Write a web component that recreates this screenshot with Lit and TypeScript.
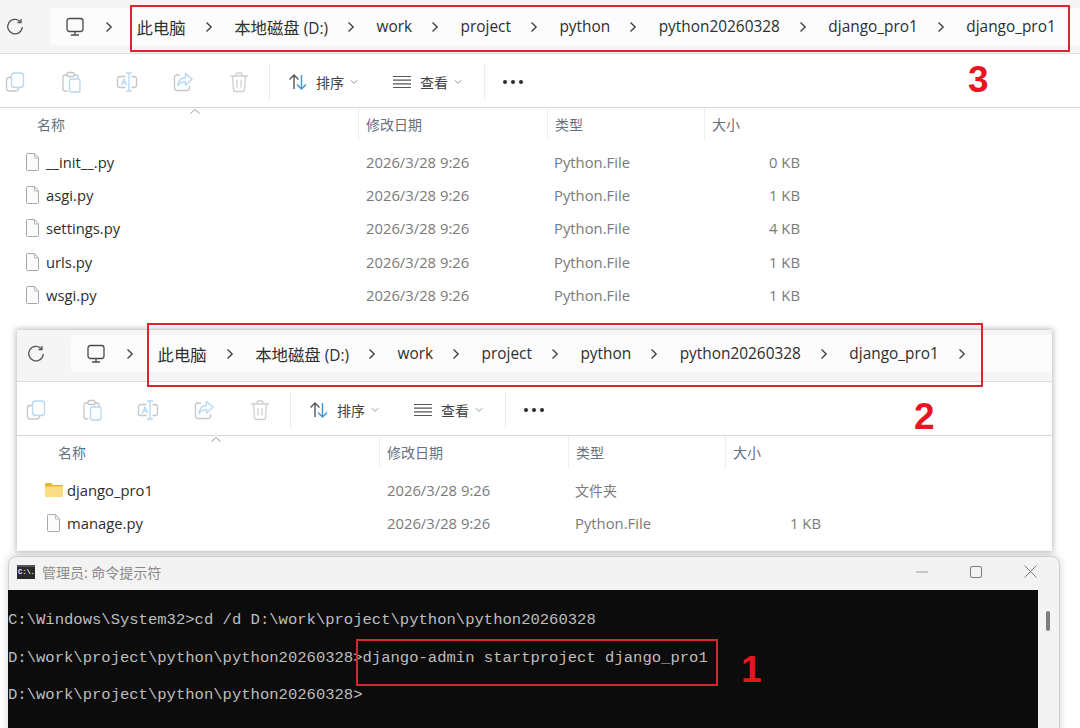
import { LitElement, html, css, svg } from "lit";
import { customElement, property } from "lit/decorators.js";

const FONT = css`"Open Sans", "Noto Sans CJK SC", sans-serif`;
const GRAY = "#c6c6c6";
const BLUE = "#b5d8f3";

const chevron = html`<svg width="8" height="12" viewBox="0 0 8 12"><path d="M1.5 1.5 6.2 6 1.5 10.5" fill="none" stroke="#3c3c3c" stroke-width="1.3"/></svg>`;
const caret = html`<svg width="8" height="6" viewBox="0 0 8 6"><path d="M.8 1.2 4 4.4 7.2 1.2" fill="none" stroke="#9a9a9a" stroke-width="1"/></svg>`;

const ico = (content: unknown) => html`<svg width="24" height="24" viewBox="0 0 24 24" fill="none" stroke-width="1.3" stroke-linecap="round" stroke-linejoin="round">${content}</svg>`;

const copyIcon = ico(svg`
  <path d="M8 7.5H6A2.5 2.5 0 0 0 3.500 10v8.500A2.500 2.500 0 0 0 6 21h7a2.500 2.500 0 0 0 2.500-2.500V18" stroke="${GRAY}"/>
  <rect x="8.500" y="3" width="12" height="14.500" rx="3" stroke="${BLUE}"/>`);
const pasteIcon = ico(svg`
  <path d="M8 21H6a2 2 0 0 1-2-2V7a2 2 0 0 1 2-2h2M15 5h2a2 2 0 0 1 2 2v1" stroke="${GRAY}"/>
  <rect x="8" y="2.500" width="7" height="4" rx="1.200" stroke="${GRAY}"/>
  <rect x="10.500" y="9" width="10.500" height="13" rx="2" stroke="${BLUE}"/>`);
const renameIcon = ico(svg`
  <path d="M10 6.500H5A2.500 2.500 0 0 0 2.500 9v6A2.500 2.500 0 0 0 5 17.500h5M17 6.500h2A2.500 2.500 0 0 1 21.500 9v6a2.500 2.500 0 0 1-2.500 2.500h-2" stroke="${GRAY}"/>
  <path d="M11.500 3h5M11.500 21h5M14 3v18M6.500 15 9 9l2.500 6M7.400 13h3.200" stroke="${BLUE}"/>`);
const shareIcon = ico(svg`
  <path d="M8.500 5H6A2.500 2.500 0 0 0 3.500 7.500V18A2.500 2.500 0 0 0 6 20.500h10a2.500 2.500 0 0 0 2.500-2.500v-1.500" stroke="${GRAY}"/>
  <path d="M14.500 3.500 21 9.200 14.500 15v-3.300c-3.500 0-5.500 1-7.500 4 .4-4.800 3-8 7.500-8.200z" stroke="${BLUE}"/>`);
const trashIcon = ico(svg`
  <path d="M3.500 6h17M9 6V4.500A1.500 1.500 0 0 1 10.500 3h3A1.500 1.500 0 0 1 15 4.500V6M5.500 6l1 13.500A2 2 0 0 0 8.500 21.500h7a2 2 0 0 0 2-2l1-13.500M10 10.500v6.500M14 10.500v6.500" stroke="#cfcfcf"/>`);
const sortIcon = html`<svg width="20" height="20" viewBox="0 0 20 20" fill="none" stroke-width="1.400"><path d="M6 17V3M1.500 7.500 6 3l4.500 4.500" stroke="#555"/><path d="M13.500 3v14M9 12.500l4.500 4.500 4.500-4.500" stroke="#3f94d8"/></svg>`;
const viewIcon = html`<svg width="20" height="14" viewBox="0 0 20 14" stroke="#555" stroke-width="1.200"><path d="M1 1.500h18M1 5.200h18M1 8.800h18M1 12.500h18"/></svg>`;
const refreshIcon = html`<svg width="18" height="18" viewBox="0 0 18 18" fill="none" stroke="#555" stroke-width="1.300"><path d="M14.500 3.800A7.300 7.300 0 1 0 16.300 9"/><path d="M15 1v3.500h-3.600"/></svg>`;
const pcIcon = html`<svg width="20" height="20" viewBox="0 0 20 20" fill="none" stroke="#4a4a4a" stroke-width="1.300"><rect x="2" y="1.500" width="16" height="13" rx="2.500"/><path d="M10 14.500v3M6 18h8"/></svg>`;
const fileIcon = html`<svg width="13" height="18" viewBox="0 0 13 18"><path d="M.5 1.500A1 1 0 0 1 1.500.5h7L12.500 5v11.500a1 1 0 0 1-1 1h-10a1 1 0 0 1-1-1z" fill="#fbfbfb" stroke="#a8a8a8"/><path d="M8.500.8V5h4" fill="none" stroke="#b8b8b8"/></svg>`;
const folderIcon = html`<svg class="folder" width="18" height="16" viewBox="0 0 18 16"><path d="M0 2a1 1 0 0 1 1-1h5l2 2h9a1 1 0 0 1 1 1v2H0z" fill="#e9b52c"/><path d="M0 4.500h18V14a1 1 0 0 1-1 1H1a1 1 0 0 1-1-1z" fill="#fbdd84"/></svg>`;

/* CJK runs are set a little larger or smaller than the Latin beside them. */
const mixed = (text: string) =>
  text.split(/([\u4e00-\u9fff]+)/).map((part, i) => (i % 2 ? html`<span class="cjk">${part}</span>` : part));

interface Row { name: string; date: string; type: string; size: string; folder?: boolean }

@customElement("file-window")
export class FileWindow extends LitElement {
  @property({ type: Array }) crumbs: string[] = [];
  @property({ type: Boolean }) trailing = false;
  @property({ type: Array }) rows: Row[] = [];

  static styles = css`
    :host { display: block; background: #fff; font-family: ${FONT}; overflow: hidden; }
    .address {
      height: var(--addr-h, 54px); box-sizing: border-box; padding-bottom: var(--addr-pad, 0px);
      display: flex; align-items: center; background: #f5f5f5; border-bottom: 1px solid #dcdcdc;
    }
    .refresh { width: 54px; padding-left: 10px; box-sizing: border-box; display: flex; }
    .bar {
      flex: 1; height: 37px; background: #fcfcfc; border-radius: 4px 0 0 4px;
      display: flex; align-items: center; padding-left: 15px; min-width: 0;
    }
    .pc { display: flex; margin-right: 1px; }
    .sep { width: 48.500px; box-sizing: border-box; padding-right: 2px; display: flex; justify-content: center; flex: none; }
    .crumbs { display: flex; align-items: center; padding-left: 2px; font-size: 15.400px; color: #2e2e2e; white-space: nowrap; }
    .crumbs .cjk { font-size: 16.400px; }
    .toolbar { height: 54px; box-sizing: border-box; padding-top: 3px; display: flex; align-items: center; padding-left: 7px; border-bottom: 1px solid #d6d6d6; font-size: 14px; color: #404040; }
    .tools { display: flex; gap: 32px; }
    .tools svg { display: block; }
    .divider { width: 1px; height: 36px; background: #ececec; flex: none; }
    .d1 { margin: 0 18px 0 18px; }
    .d2 { margin: 0 18px 0 22px; }
    .action { display: flex; align-items: center; }
    .action .txt { margin: 0 6px 0 8px; width: 28px; }
    .view { margin-left: 34px; }
    .dots { display: flex; gap: 4px; }
    .dots i { width: 4px; height: 4px; border-radius: 50%; background: #2c2c2c; display: block; }
    .cols { display: grid; grid-template-columns: 362px 189px 157px 105px; }
    .head { height: 32px; position: relative; color: #66717f; font-size: 14px; }
    .head > div { display: flex; align-items: center; padding-left: 7px; border-left: 1px solid #eeeeee; }
    .head > div:first-child { padding-left: 41px; border-left: 0; }
    .head > div:last-child { border-right: 1px solid #eeeeee; }
    .sorted { position: absolute; left: 193px; top: 0; line-height: 0; }
    .list { padding-top: 5px; }
    .row { height: 33.400px; align-items: center; font-size: 14.800px; color: #7a7a7a; }
    .row > div { padding-left: 8px; white-space: nowrap; }
    .row > div.kind { padding-left: 7px; }
    .row .cjk { font-size: 14px; }
    .row .name { display: flex; align-items: center; padding-left: 30px; color: #2d2d2d; }
    .row .slot { width: 20px; display: flex; flex: none; }
    .row .folder { margin-left: -2px; flex: none; }
    .row .size { padding: 0 9px 0 0; text-align: right; }
  `;

  render() {
    return html`
      <div class="address">
        <div class="refresh">${refreshIcon}</div>
        <div class="bar">
          <span class="pc">${pcIcon}</span>
          <span class="sep">${chevron}</span>
          <div class="crumbs">
            ${this.crumbs.map((c, i) => html`<span>${mixed(c)}</span>${i < this.crumbs.length - 1 || this.trailing ? html`<span class="sep">${chevron}</span>` : ""}`)}
          </div>
        </div>
      </div>
      <div class="toolbar">
        <div class="tools">${copyIcon}${pasteIcon}${renameIcon}${shareIcon}${trashIcon}</div>
        <span class="divider d1"></span>
        <div class="action">${sortIcon}<span class="txt">排序</span>${caret}</div>
        <div class="action view">${viewIcon}<span class="txt">查看</span>${caret}</div>
        <span class="divider d2"></span>
        <div class="dots"><i></i><i></i><i></i></div>
      </div>
      <div class="cols head">
        <div>名称</div><div>修改日期</div><div>类型</div><div>大小</div>
        <span class="sorted"><svg width="12" height="7" viewBox="0 0 12 7"><path d="M1.500 5.500 6 1.500l4.500 4" fill="none" stroke="#9a9a9a"/></svg></span>
      </div>
      <div class="list">
        ${this.rows.map((r) => html`
          <div class="cols row">
            <div class="name"><span class="slot">${r.folder ? folderIcon : fileIcon}</span>${r.name}</div>
            <div>${r.date}</div>
            <div class="kind">${mixed(r.type)}</div>
            <div class="size">${r.size}</div>
          </div>`)}
      </div>
    `;
  }
}

const D = "2026/3/28 9:26";
const topRows: Row[] = [
  { name: "__init__.py", date: D, type: "Python.File", size: "0 KB" },
  { name: "asgi.py", date: D, type: "Python.File", size: "1 KB" },
  { name: "settings.py", date: D, type: "Python.File", size: "4 KB" },
  { name: "urls.py", date: D, type: "Python.File", size: "1 KB" },
  { name: "wsgi.py", date: D, type: "Python.File", size: "1 KB" },
];
const midRows: Row[] = [
  { name: "django_pro1", date: D, type: "文件夹", size: "", folder: true },
  { name: "manage.py", date: D, type: "Python.File", size: "1 KB" },
];
const base = ["此电脑", "本地磁盘 (D:)", "work", "project", "python", "python20260328", "django_pro1"];

@customElement("app-root")
export class AppRoot extends LitElement {
  static styles = css`
    :host { display: block; position: relative; width: 1080px; height: 728px; overflow: hidden; background: #fff; font-family: ${FONT}; }
    .win-a { position: absolute; left: -4px; top: 0; width: 1088px; height: 320px; --addr-h: 54px; --addr-pad: 0px; }
    .win-b { position: absolute; left: 17px; top: 330px; width: 1035px; height: 221px; --addr-h: 52px; --addr-pad: 4px; box-shadow: 0 0 6px 1px rgba(0,0,0,.28); }
    .term {
      position: absolute; left: 8px; top: 556px; width: 1052px; height: 190px; box-sizing: border-box;
      background: #f3f3f3; border: 1px solid #cfcfcf; border-radius: 8px 8px 0 0; box-shadow: 0 0 8px rgba(0,0,0,.18);
      display: flex; flex-direction: column;
    }
    .title { height: 33px; flex: none; box-sizing: border-box; padding: 0 0 4px 8px; display: flex; align-items: center; color: #8a8a8a; font-size: 14px; }
    .cmd-icon { width: 18px; height: 14px; flex: none; background: #2a2a2a; border-top: 2px solid #555; box-sizing: border-box; color: #eee; font: bold 7px/11px "Liberation Mono", monospace; padding-left: 1px; margin-right: 7px; }
    .ctrl { margin-left: auto; display: flex; align-items: center; padding-right: 22px; gap: 42px; }
    .ctrl svg { display: block; }
    .body { flex: 1; display: flex; min-height: 0; }
    .console { width: 1030px; margin-left: -1px; background: #0c0c0c; color: #bebebe; font: 15.550px/37.500px "Liberation Mono", monospace; padding-top: 12px; white-space: pre; box-sizing: border-box; }
    .track { flex: 1; position: relative; }
    .thumb { position: absolute; left: 8px; top: 21px; width: 4px; height: 20px; border-radius: 2px; background: #7e7e7e; }
    .box { position: absolute; border: 2px solid #d9252f; box-sizing: border-box; pointer-events: none; }
    .b3 { left: 130px; top: 5px; width: 940px; height: 47px; }
    .b2 { left: 147px; top: 323px; width: 836px; height: 64px; }
    .b1 { left: 356px; top: 639px; width: 362px; height: 47px; }
    .num { position: absolute; color: #e8141f; font: bold 37px/1 "Liberation Sans", sans-serif; }
    .n3 { left: 968px; top: 61px; }
    .n2 { left: 914px; top: 398px; }
    .n1 { left: 741px; top: 651px; }
  `;

  render() {
    return html`
      <file-window class="win-a" .crumbs=${[...base, "django_pro1"]} .rows=${topRows}></file-window>
      <file-window class="win-b" .crumbs=${base} .trailing=${true} .rows=${midRows}></file-window>
      <div class="term">
        <div class="title">
          <span class="cmd-icon">C:\\.</span>管理员: 命令提示符
          <div class="ctrl">
            <svg width="12" height="12" viewBox="0 0 12 12"><path d="M0 6h12" stroke="#9a9a9a"/></svg>
            <svg width="12" height="12" viewBox="0 0 12 12"><rect x=".5" y=".5" width="11" height="11" rx="1.500" fill="none" stroke="#7a7a7a"/></svg>
            <svg width="13" height="13" viewBox="0 0 13 13"><path d="M.5.5l12 12M12.500.5l-12 12" stroke="#7a7a7a"/></svg>
          </div>
        </div>
        <div class="body">
          <div class="console">C:\\Windows\\System32&gt;cd /d D:\\work\\project\\python\\python20260328
D:\\work\\project\\python\\python20260328&gt;django-admin startproject django_pro1
D:\\work\\project\\python\\python20260328&gt;</div>
          <div class="track"><div class="thumb"></div></div>
        </div>
      </div>
      <div class="box b3"></div>
      <div class="box b2"></div>
      <div class="box b1"></div>
      <span class="num n3">3</span>
      <span class="num n2">2</span>
      <span class="num n1">1</span>
    `;
  }
}
